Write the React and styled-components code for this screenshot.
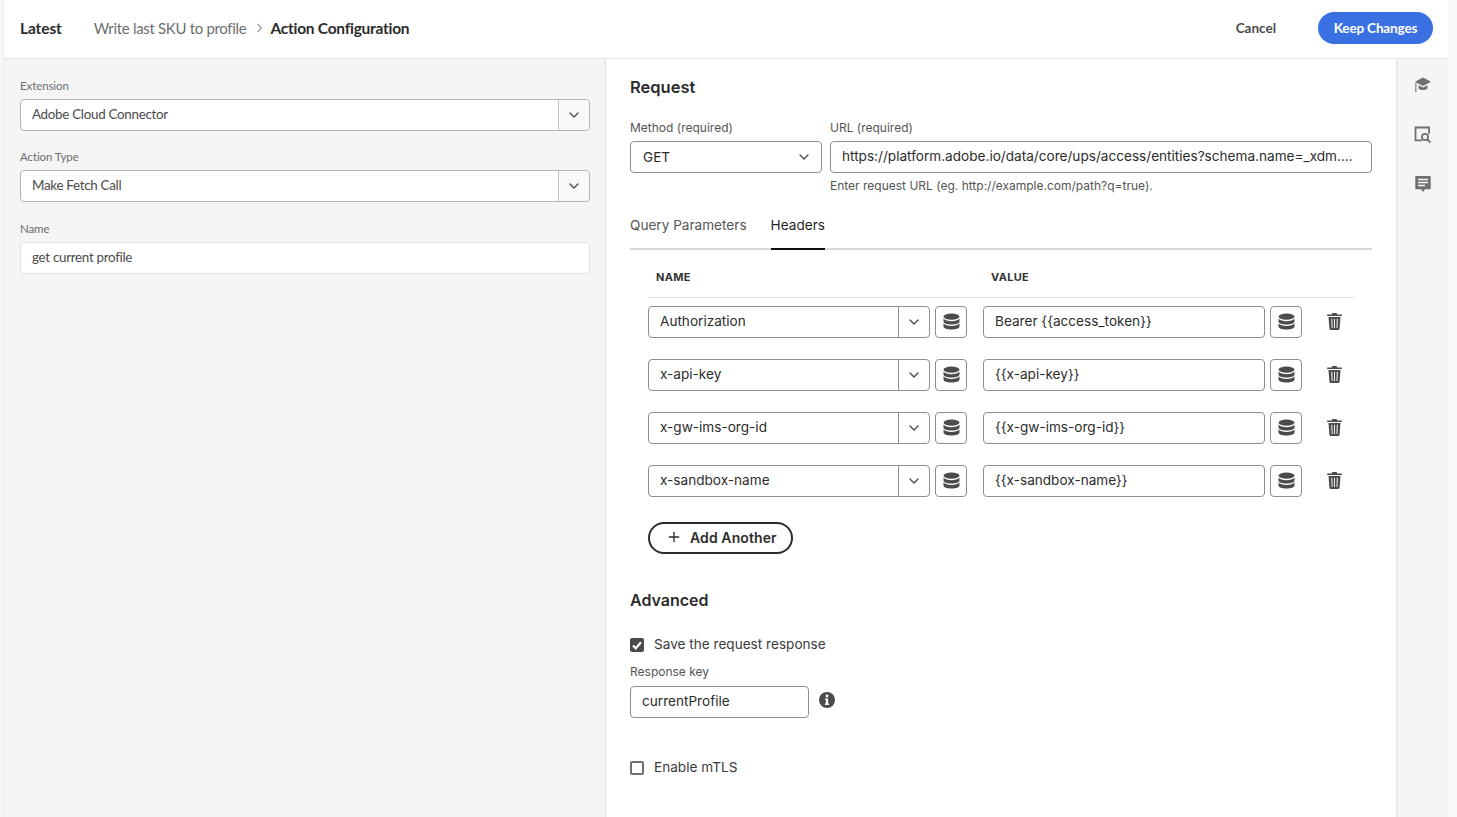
import React from "react";
import styled, { createGlobalStyle } from "styled-components";
import { ChevronDown, Plus } from "lucide-react";

const GlobalStyle = createGlobalStyle`
  html, body {
    margin: 0;
    height: 100%;
    background: #f8f8f8;
    overflow: hidden;
  }
  * { box-sizing: border-box; }
`;

const adobeFont = `Lato, "Open Sans", sans-serif`;
const interFont = `Inter, "Liberation Sans", sans-serif`;

const Page = styled.div`
  width: 1457px;
  height: 817px;
  padding: 0 9px 0 3px;
  display: flex;
  flex-direction: column;
`;

const Header = styled.header`
  height: 59px;
  flex: none;
  display: flex;
  align-items: center;
  padding: 0 15px 3px 16px;
  background: #fff;
  border-left: 1px solid #ececec;
  border-bottom: 1px solid #e8e8e8;
  font-family: ${adobeFont};
`;

const Title = styled.span`
  font-size: 15.5px;
  font-weight: 700;
  letter-spacing: -0.1px;
  color: #2c2c2c;
  margin-right: 32px;
`;

const Crumb = styled.span`
  font-size: 15px;
  letter-spacing: -0.32px;
  color: #6e6e6e;
`;

const CrumbSep = styled.span`
  margin: 0 7px 0 10px;
  display: flex;
  color: #999;
`;

const CrumbCurrent = styled.span`
  font-size: 15.5px;
  font-weight: 700;
  letter-spacing: -0.25px;
  color: #2c2c2c;
`;

const HeaderActions = styled.div`
  margin-left: auto;
  display: flex;
  align-items: center;
  gap: 42px;
`;

const Cancel = styled.span`
  font-size: 13.5px;
  font-weight: 700;
  color: #4b4b4b;
`;

const Primary = styled.button`
  height: 32px;
  width: 115px;
  border: 0;
  border-radius: 16px;
  background: #3a70e2;
  color: #fff;
  font: 700 13.5px ${adobeFont};
  letter-spacing: -0.15px;
  padding: 0;
`;

const Body = styled.div`
  flex: 1;
  display: flex;
  min-height: 0;
`;

const LeftPanel = styled.aside`
  width: 603px;
  flex: none;
  background: #f5f5f5;
  border-left: 1px solid #ececec;
  border-right: 1px solid #e1e1e1;
  padding: 20px 15px 0 16px;
  font-family: ${adobeFont};
`;

const LeftField = styled.div`
  margin-bottom: 19px;

  &:nth-child(2) {
    margin-bottom: 20px;
  }
`;

const LeftLabel = styled.div`
  font-size: 11.5px;
  line-height: 14px;
  letter-spacing: -0.1px;
  color: #6e6e6e;
  margin-bottom: 6px;
`;

const LeftSelectBox = styled.div`
  height: 32px;
  display: flex;
  background: #fff;
  border: 1px solid ${({ $soft }) => ($soft ? "#e1e1e1" : "#b3b3b3")};
  border-radius: 4px;
  font-size: 13.4px;
  letter-spacing: -0.3px;
  color: #4b4b4b;
`;

const LeftValue = styled.div`
  flex: 1;
  padding: 0 11px;
  line-height: 28px;
`;

const LeftCaret = styled.div`
  width: 31px;
  display: flex;
  align-items: center;
  justify-content: center;
  background: #fafafa;
  border-left: 1px solid #c4c4c4;
  border-radius: 0 4px 4px 0;
  color: #4b4b4b;
`;

const Main = styled.main`
  flex: 1;
  min-width: 0;
  background: #fff;
  padding: 17px 24px 0 24px;
  font-family: ${interFont};
  color: #2c2c2c;
`;

const SectionTitle = styled.h2`
  margin: 0;
  font-size: 16.5px;
  line-height: 22px;
  font-weight: 600;
  color: #2c2c2c;
`;

const MethodRow = styled.div`
  display: flex;
  gap: 8px;
  margin-top: 22px;
`;

const Column = styled.div`
  width: ${({ $width }) => ($width ? `${$width}px` : "auto")};
  flex: ${({ $width }) => ($width ? "none" : "1")};
  min-width: 0;
`;

const Label = styled.div`
  font-size: 12px;
  line-height: 16px;
  color: #555;
  margin-bottom: 5px;
`;

const Field = styled.div`
  height: 32px;
  display: flex;
  align-items: center;
  justify-content: space-between;
  padding: 0 11px 3px 11px;
  border: 1px solid #8e8e8e;
  border-radius: 4px;
  background: #fff;
  font-size: 13.6px;
  color: #2c2c2c;
  white-space: nowrap;
  overflow: hidden;
  width: ${({ $width }) => ($width ? `${$width}px` : "auto")};
  flex: ${({ $width }) => ($width ? "none" : "1")};
`;

const MethodField = styled(Field)`
  padding: 0 9px 1px 12px;
`;

const Hint = styled.div`
  margin-top: 5px;
  font-size: 12px;
  line-height: 16px;
  color: #555;
`;

const Tabs = styled.div`
  display: flex;
  gap: 24px;
  height: 42px;
  margin-top: 14px;
  border-bottom: 2px solid #d8d8d8;
`;

const Tab = styled.div`
  height: 42px;
  padding-top: 8px;
  font-size: 13.6px;
  line-height: 18px;
  color: ${({ $active }) => ($active ? "#1f1f1f" : "#555")};
  border-bottom: 2px solid ${({ $active }) => ($active ? "#111" : "transparent")};
`;

const HeaderTable = styled.div`
  padding: 0 18px;
`;

const TableHead = styled.div`
  height: 48px;
  display: flex;
  align-items: center;
  padding: 6px 0 0 8px;
  border-bottom: 1px solid #e1e1e1;
  font-size: 11px;
  font-weight: 700;
  letter-spacing: 0.3px;
  color: #333;
`;

const NameHead = styled.div`
  width: 335px;
`;

const Rows = styled.div`
  display: flex;
  flex-direction: column;
  gap: 21px;
  padding-top: 8px;
`;

const Row = styled.div`
  display: flex;
  align-items: center;
`;

const ComboBox = styled.div`
  width: 282px;
  height: 32px;
  flex: none;
  display: flex;
  border: 1px solid #8e8e8e;
  border-radius: 4px;
  font-size: 13.6px;
`;

const ComboValue = styled.div`
  flex: 1;
  padding-left: 11px;
  line-height: 28px;
  color: #2c2c2c;
`;

const ComboCaret = styled.div`
  width: 31px;
  display: flex;
  align-items: center;
  justify-content: center;
  border-left: 1px solid #8e8e8e;
  color: #4b4b4b;
`;

const DataButton = styled.div`
  width: 32px;
  height: 32px;
  flex: none;
  margin-left: 5px;
  padding-bottom: 1px;
  display: flex;
  align-items: center;
  justify-content: center;
  border: 1px solid #8e8e8e;
  border-radius: 4px;
  color: #4b4b4b;
`;

const ValueField = styled(Field)`
  margin-left: 16px;
`;

const TrashWrap = styled.div`
  margin: 0 0 1px 25px;
  display: flex;
  color: #4b4b4b;
`;

const AddButton = styled.div`
  width: 145px;
  height: 32px;
  margin-top: 25px;
  display: flex;
  align-items: center;
  gap: 8px;
  padding: 0 0 2px 16px;
  border: 2px solid #2c2c2c;
  border-radius: 16px;
  font-size: 14px;
  letter-spacing: 0.1px;
  font-weight: 600;
  color: #2c2c2c;
`;

const AdvancedTitle = styled(SectionTitle)`
  margin-top: 35px;
  font-size: 16px;
`;

const CheckRow = styled.div`
  display: flex;
  align-items: center;
  gap: 10px;
  font-size: 13.6px;
  line-height: 18px;
  color: #3a3a3a;
  margin-top: ${({ $top }) => $top}px;
`;

const CheckBox = styled.div`
  width: 14px;
  height: 14px;
  flex: none;
  margin-top: 2px;
  display: flex;
  align-items: center;
  justify-content: center;
  border-radius: 2px;
  background: ${({ $checked }) => ($checked ? "#4b4b4b" : "#fff")};
  border: ${({ $checked }) => ($checked ? "0" : "2px solid #707070")};
`;

const ResponseLabel = styled(Label)`
  margin: 11px 0 6px;
`;

const ResponseRow = styled.div`
  display: flex;
  align-items: center;
  gap: 10px;
`;

const InfoWrap = styled.div`
  display: flex;
  margin-bottom: 4px;
`;

const RailPanel = styled.nav`
  width: 52px;
  flex: none;
  background: #f5f5f5;
  border-left: 2px solid #e8e8e8;
  display: flex;
  flex-direction: column;
  align-items: center;
  gap: 31.5px;
  padding-top: 17px;
  color: #707070;
`;

const DatabaseIcon = () => (
  <svg width="17" height="17" viewBox="0 0 17 17" fill="currentColor">
    <ellipse cx="8.5" cy="3.6" rx="8" ry="3.1" />
    <path d="M.5 5.6c1.3 1.7 4.6 2.7 8 2.7s6.700-1 8-2.700v2.800c0 1.700-3.600 3.100-8 3.100s-8-1.400-8-3.100z" />
    <path d="M.5 10.300c1.300 1.700 4.600 2.700 8 2.700s6.700-1 8-2.700v3.100c0 1.700-3.600 3.100-8 3.100s-8-1.400-8-3.100z" />
  </svg>
);

const TrashIcon = () => (
  <svg width="15" height="17" viewBox="0 0 15 17" fill="currentColor">
    <path d="M5.400 0h4.200l.6 1.500h4.300c.2 0 .4.200.4.400v1.200H.1V1.900c0-.2.200-.4.400-.4h4.300z" />
    <path fillRule="evenodd" d="M1.500 3.900h12l-.9 11.900c-.1.700-.6 1.200-1.300 1.200H3.700c-.7 0-1.200-.5-1.300-1.200zM4.300 5.700l.4 9.300h.9l-.3-9.300zm2.800 0V15h.9V5.700zm2.700 0-.3 9.300h.9l.4-9.300z" />
  </svg>
);

const CapIcon = () => (
  <svg width="18" height="18" viewBox="0 0 18 18" fill="currentColor">
    <path d="M9 1.500 1 5.800l8 4.200 8-4.200z" />
    <path d="M4.500 9.200v3.300c1 1 2.800 1.600 4.500 1.600s3.500-.6 4.500-1.600V9.200L9 11.600z" />
    <path d="M1.300 6.800h1.100v9.400H1.300z" />
  </svg>
);

const SearchPageIcon = () => (
  <svg width="18" height="18" viewBox="0 0 18 18" fill="none" stroke="currentColor" strokeWidth="1.800">
    <path d="M8 14.400H1.500V1.500h13.600v6.200" />
    <circle cx="11" cy="11" r="3.100" />
    <path d="m13.300 13.300 3.200 3.200" />
  </svg>
);

const CommentIcon = () => (
  <svg width="16" height="18" viewBox="0 0 16 18">
    <path fill="currentColor" d="M.8 1h14.400c.3 0 .5.200.5.500v12.200c0 .3-.2.500-.5.500H10l-2 2.800-2-2.800H.8c-.3 0-.5-.2-.5-.5V1.500c0-.3.200-.5.500-.500z" />
    <path stroke="#f5f5f5" strokeWidth="1.300" d="M3 4.500h10M3 7.500h10M3 10.500h7" />
  </svg>
);

const InfoIcon = () => (
  <svg width="16" height="16" viewBox="0 0 16 16">
    <circle cx="8" cy="8" r="8" fill="#4b4b4b" />
    <circle cx="8" cy="4" r="1.400" fill="#fff" />
    <path fill="#fff" d="M5.900 6.500h3.200v5.100h1v1.300H5.900v-1.300h1V7.800h-1z" />
  </svg>
);

const CheckMark = () => (
  <svg width="10" height="9" viewBox="0 0 10 9" fill="none" stroke="#fff" strokeWidth="2.200">
    <path d="M1 4.500 3.800 7.300 9 1.300" />
  </svg>
);

const headerRows = [
  { name: "Authorization", value: "Bearer {{access_token}}" },
  { name: "x-api-key", value: "{{x-api-key}}" },
  { name: "x-gw-ims-org-id", value: "{{x-gw-ims-org-id}}" },
  { name: "x-sandbox-name", value: "{{x-sandbox-name}}" },
];

const App = () => {
  return (
    <Page>
      <GlobalStyle />
      <Header>
        <Title>Latest</Title>
        <Crumb>Write last SKU to profile</Crumb>
        <CrumbSep>
          <svg width="7" height="10" viewBox="0 0 7 10" fill="none" stroke="currentColor" strokeWidth="1.200">
            <path d="m1.500 1 4 4-4 4" />
          </svg>
        </CrumbSep>
        <CrumbCurrent>Action Configuration</CrumbCurrent>
        <HeaderActions>
          <Cancel>Cancel</Cancel>
          <Primary>Keep Changes</Primary>
        </HeaderActions>
      </Header>
      <Body>
        <LeftPanel>
          <LeftField>
            <LeftLabel>Extension</LeftLabel>
            <LeftSelectBox>
              <LeftValue>Adobe Cloud Connector</LeftValue>
              <LeftCaret>
                <ChevronDown size={16} strokeWidth={2} />
              </LeftCaret>
            </LeftSelectBox>
          </LeftField>
          <LeftField>
            <LeftLabel>Action Type</LeftLabel>
            <LeftSelectBox>
              <LeftValue>Make Fetch Call</LeftValue>
              <LeftCaret>
                <ChevronDown size={16} strokeWidth={2} />
              </LeftCaret>
            </LeftSelectBox>
          </LeftField>
          <LeftField>
            <LeftLabel>Name</LeftLabel>
            <LeftSelectBox $soft>
              <LeftValue>get current profile</LeftValue>
            </LeftSelectBox>
          </LeftField>
        </LeftPanel>
        <Main>
          <SectionTitle>Request</SectionTitle>
          <MethodRow>
            <Column $width={192}>
              <Label>Method (required)</Label>
              <MethodField>
                GET
                <ChevronDown size={16} strokeWidth={2} color="#4b4b4b" />
              </MethodField>
            </Column>
            <Column>
              <Label>URL (required)</Label>
              <Field>https://platform.adobe.io/data/core/ups/access/entities?schema.name=_xdm....</Field>
              <Hint>Enter request URL (eg. http://example.com/path?q=true).</Hint>
            </Column>
          </MethodRow>
          <Tabs>
            <Tab>Query Parameters</Tab>
            <Tab $active>Headers</Tab>
          </Tabs>
          <HeaderTable>
            <TableHead>
              <NameHead>NAME</NameHead>
              <div>VALUE</div>
            </TableHead>
            <Rows>
              {headerRows.map((row) => (
                <Row key={row.name}>
                  <ComboBox>
                    <ComboValue>{row.name}</ComboValue>
                    <ComboCaret>
                      <ChevronDown size={16} strokeWidth={2} />
                    </ComboCaret>
                  </ComboBox>
                  <DataButton>
                    <DatabaseIcon />
                  </DataButton>
                  <ValueField $width={282}>{row.value}</ValueField>
                  <DataButton>
                    <DatabaseIcon />
                  </DataButton>
                  <TrashWrap>
                    <TrashIcon />
                  </TrashWrap>
                </Row>
              ))}
            </Rows>
            <AddButton>
              <Plus size={16} strokeWidth={2} />
              Add Another
            </AddButton>
          </HeaderTable>
          <AdvancedTitle>Advanced</AdvancedTitle>
          <CheckRow $top={24}>
            <CheckBox $checked>
              <CheckMark />
            </CheckBox>
            Save the request response
          </CheckRow>
          <ResponseLabel>Response key</ResponseLabel>
          <ResponseRow>
            <Field $width={179}>currentProfile</Field>
            <InfoWrap>
              <InfoIcon />
            </InfoWrap>
          </ResponseRow>
          <CheckRow $top={40}>
            <CheckBox />
            Enable mTLS
          </CheckRow>
        </Main>
        <RailPanel>
          <CapIcon />
          <SearchPageIcon />
          <CommentIcon />
        </RailPanel>
      </Body>
    </Page>
  );
};

export default App;
